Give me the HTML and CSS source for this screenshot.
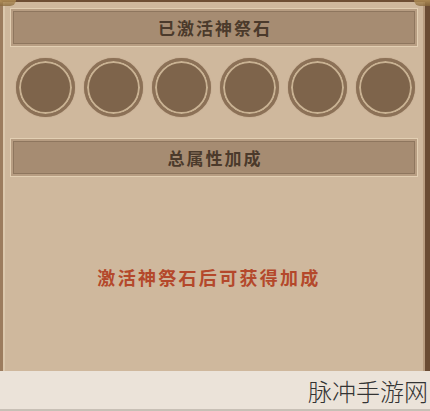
FILE: index.html
```html
<!DOCTYPE html>
<html lang="zh">
<head>
<meta charset="utf-8">
<link rel="stylesheet" href="styles.css">
</head>
<body>
<div class="screen">
  <div class="panel">
    <div class="orn orn-left"></div>
    <div class="orn orn-right"></div>
    <div class="bar"><div class="bar-inner">已激活神祭石</div></div>
    <div class="slots">
      <div class="slot"></div>
      <div class="slot"></div>
      <div class="slot"></div>
      <div class="slot"></div>
      <div class="slot"></div>
      <div class="slot"></div>
    </div>
    <div class="bar bar2"><div class="bar-inner">总属性加成</div></div>
    <div class="hint">激活神祭石后可获得加成</div>
  </div>
  <div class="footer"><span class="brand">脉冲手游网</span></div>
</div>
</body>
</html>
```
FILE: styles.css
```css
html, body {
  margin: 0;
  padding: 0;
  background: #ebe3d9;
}
.screen {
  width: 430px;
  height: 411px;
  overflow: hidden;
  display: flex;
  flex-direction: column;
  font-family: "Noto Sans CJK SC", sans-serif;
}
.panel {
  position: relative;
  height: 371px;
  box-sizing: border-box;
  background: #cfb89d;
  border-top: 2px solid #6e4e34;
  border-left: 3px solid #9c7c5e;
  border-right: 5px solid #6a4b33;
  box-shadow: inset 2px 0 0 #dcc8ad, inset -2px 0 0 #b89c80;
  padding: 6px 0 0 7px;
  display: flex;
  flex-direction: column;
}
.orn {
  position: absolute;
  top: -2px;
  width: 16px;
  height: 6px;
  background: linear-gradient(#b8955a, #8a6a3e);
  opacity: 0.8;
}
.orn-left { left: -3px; border-radius: 0 0 14px 0; }
.orn-right { right: -5px; border-radius: 0 0 0 14px; }
.bar {
  width: 408px;
  height: 39px;
  box-sizing: border-box;
  border: 1px solid #e2cfb3;
  padding: 2px;
  background: #b79d82;
}
.bar-inner {
  height: 100%;
  box-sizing: border-box;
  border: 1px solid #8e765e;
  background: #a68c72;
  display: flex;
  align-items: center;
  justify-content: center;
  padding-left: 2px;
  font-size: 17px;
  font-weight: 700;
  color: #4b3a2b;
  letter-spacing: 2px;
}
.slots {
  display: flex;
  gap: 9px;
  margin: 11px 0 0 6px;
}
.slot {
  width: 59px;
  height: 59px;
  box-sizing: border-box;
  border-radius: 50%;
  background: #7e644b;
  border: 3px solid #8c7157;
  box-shadow: inset 0 0 0 2px #c9b293, 0 0 1px #9a7e63;
}
.bar2 {
  margin-top: 21px;
}
.hint {
  margin-top: 87px;
  width: 398px;
  text-align: center;
  font-size: 18px;
  font-weight: 700;
  color: #b4482b;
  letter-spacing: 2.3px;
}
.footer {
  height: 40px;
  background: #ebe3d9;
  border-bottom: 2px solid #c8c0b6;
  box-sizing: border-box;
  display: flex;
  align-items: center;
  justify-content: flex-end;
  padding-right: 2px;
}
.brand {
  font-size: 24px;
  font-weight: 300;
  color: #333;
}
```
